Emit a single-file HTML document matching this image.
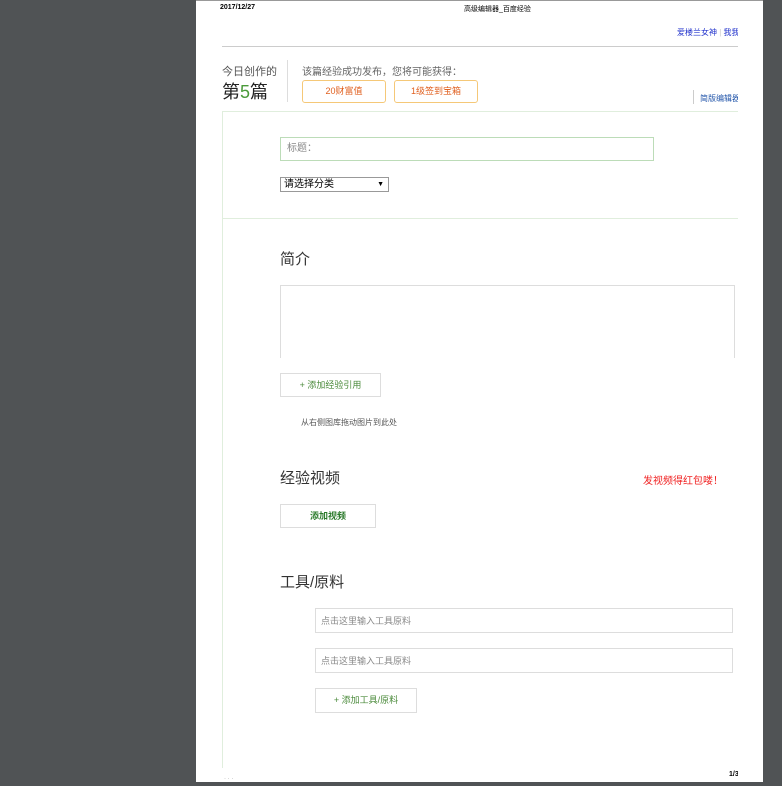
<!DOCTYPE html>
<html><head><meta charset="utf-8"><style>
body{margin:0;width:782px;height:786px;background:#505355;position:relative;overflow:hidden;font-family:"Liberation Sans","Noto Sans CJK SC",sans-serif;}
.pg{position:absolute;left:196px;top:0;width:567px;height:782px;background:#fff;}
.clip{position:absolute;left:0;top:0;width:542px;height:782px;overflow:hidden;}
.a{position:absolute;white-space:nowrap;}
.box{position:absolute;border:1px solid #ddd;background:#fff;}
h{position:absolute;font-size:15px;color:#333;white-space:nowrap;}
</style></head><body>
<div class="pg"><div style="position:absolute;left:0;top:0;width:567px;height:1px;background:#999"></div><div class="clip">
<div class="a" style="left:24px;top:4px;font-size:7px;font-weight:bold;">2017/12/27</div>
<div class="a" style="left:268px;top:4px;font-size:7px;">高级编辑器_百度经验</div>
<div class="a" style="left:481px;top:27px;font-size:8px;color:#2233cc;">爱楼兰女神 <span style="color:#ccc">|</span> 我我</div>
<div style="position:absolute;left:26px;top:46px;width:530px;height:1px;background:#ccc"></div>
<div class="a" style="left:26px;top:63px;font-size:11px;color:#555;">今日创作的</div>
<div class="a" style="left:26px;top:78px;font-size:18px;color:#222;">第<span style="color:#4a9a3a">5</span>篇</div>
<div style="position:absolute;left:91px;top:60px;width:1px;height:42px;background:#ddd"></div>
<div class="a" style="left:106px;top:63px;font-size:10px;color:#666;">该篇经验成功发布，您将可能获得：</div>
<div class="box" style="left:106px;top:80px;width:82px;height:21px;border-color:#f5c878;border-radius:3px;font-size:9px;color:#e06020;text-align:center;line-height:21px;">20财富值</div>
<div class="box" style="left:198px;top:80px;width:82px;height:21px;border-color:#f5c878;border-radius:3px;font-size:9px;color:#e06020;text-align:center;line-height:21px;">1级签到宝箱</div>
<div style="position:absolute;left:497px;top:90px;width:1px;height:14px;background:#ccc"></div>
<div class="a" style="left:504px;top:93px;font-size:8px;color:#2255aa;">简版编辑器</div>
<div style="position:absolute;left:26px;top:111px;width:541px;height:670px;border-left:1px solid #e0eedd;border-top:1px solid #e0eedd"></div>
<div style="position:absolute;left:27px;top:218px;width:540px;height:1px;background:#e0eedd"></div>
<div class="box" style="left:84px;top:137px;height:22px;border:1px solid #bcdcb8;font-size:10px;color:#888;line-height:22px;padding-left:6px;width:366px;">标题：</div>
<div class="box" style="left:84px;top:177px;width:104px;height:13px;border:1px solid #999;font-size:10px;line-height:13px;padding-left:3px;">请选择分类<span style="position:absolute;right:4px;font-size:7px">▼</span></div>
<h style="left:84px;top:248px;">简介</h>
<div style="position:absolute;left:84px;top:285px;width:453px;height:72px;border:1px solid #ddd;border-bottom:none"></div>
<div class="box" style="left:84px;top:373px;width:99px;height:22px;font-size:9px;color:#4a8a3a;line-height:22px;text-align:center;">+ 添加经验引用</div>
<div class="a" style="left:105px;top:417px;font-size:8px;color:#555;">从右侧图库拖动图片到此处</div>
<h style="left:84px;top:467px;">经验视频</h>
<div class="a" style="left:447px;top:472px;font-size:10px;color:#f02020;">发视频得红包喽！</div>
<div class="box" style="left:84px;top:504px;width:94px;height:22px;font-size:9px;color:#2a7a2a;font-weight:bold;line-height:22px;text-align:center;">添加视频</div>
<h style="left:84px;top:571px;">工具/原料</h>
<div class="box" style="left:119px;top:608px;width:418px;height:25px;font-size:9px;color:#888;line-height:25px;padding-left:5px;box-sizing:border-box;">点击这里输入工具原料</div>
<div class="box" style="left:119px;top:648px;width:418px;height:25px;font-size:9px;color:#888;line-height:25px;padding-left:5px;box-sizing:border-box;">点击这里输入工具原料</div>
<div class="box" style="left:119px;top:688px;width:100px;height:23px;font-size:9px;color:#4a8a3a;line-height:23px;text-align:center;">+ 添加工具/原料</div>
<div class="a" style="left:533px;top:771px;font-size:7px;font-weight:bold;">1/3</div>
<div style="position:absolute;left:0;top:768px;width:52px;height:14px;background:#fff"></div>
<div class="a" style="left:28px;top:776px;font-size:6px;color:#999;">· · ·</div>
</div></div>
</body></html>
